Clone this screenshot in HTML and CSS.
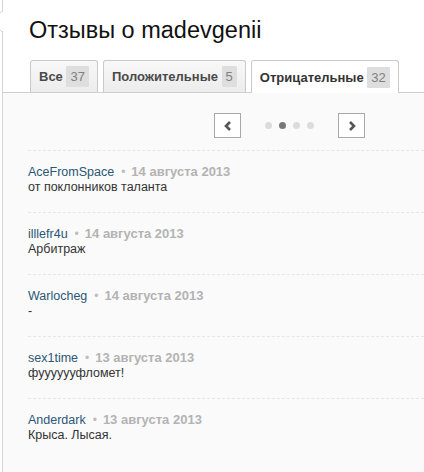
FILE: index.html
```html
<!DOCTYPE html>
<html lang="ru">
<head>
<meta charset="utf-8">
<title>Отзывы о madevgenii</title>
<link rel="stylesheet" href="styles.css">
</head>
<body>
<div class="popover">
  <span class="arrow"></span>
  <h1 class="title">Отзывы о madevgenii</h1>
  <div class="tabs">
    <div class="tab">Все <span class="count">37</span></div>
    <div class="tab">Положительные <span class="count">5</span></div>
    <div class="tab active">Отрицательные <span class="count">32</span></div>
  </div>
  <div class="panel">
    <div class="pager">
      <button class="pg-btn" aria-label="Назад"><svg width="8" height="10" viewBox="0 0 8 10"><polyline points="6,1 2,5 6,9" fill="none" stroke="#555" stroke-width="2.6"/></svg></button>
      <div class="dots"><span class="dot"></span><span class="dot on"></span><span class="dot"></span><span class="dot"></span></div>
      <button class="pg-btn" aria-label="Вперёд"><svg width="8" height="10" viewBox="0 0 8 10"><polyline points="2,1 6,5 2,9" fill="none" stroke="#555" stroke-width="2.6"/></svg></button>
    </div>
    <ul class="reviews">
      <li class="review"><div class="meta"><span class="author">AceFromSpace</span><span class="sep">•</span><span class="date">14 августа 2013</span></div><div class="text">от поклонников таланта</div></li>
      <li class="review"><div class="meta"><span class="author">illlefr4u</span><span class="sep">•</span><span class="date">14 августа 2013</span></div><div class="text">Арбитраж</div></li>
      <li class="review"><div class="meta"><span class="author">Warlocheg</span><span class="sep">•</span><span class="date">14 августа 2013</span></div><div class="text">-</div></li>
      <li class="review"><div class="meta"><span class="author">sex1time</span><span class="sep">•</span><span class="date">13 августа 2013</span></div><div class="text">фууууууфломет!</div></li>
      <li class="review"><div class="meta"><span class="author">Anderdark</span><span class="sep">•</span><span class="date">13 августа 2013</span></div><div class="text">Крыса. Лысая.</div></li>
    </ul>
  </div>
</div>
</body>
</html>
```
FILE: styles.css
```css
html, body {
  margin: 0;
  padding: 0;
  background: #fff;
  font-family: "Liberation Sans", Arial, sans-serif;
  overflow: hidden;
}
.popover {
  position: relative;
  margin-left: 2px;
  border-left: 1px solid #d4d4d4;
  background: #fff;
  min-height: 472px;
  display: flex;
  flex-direction: column;
}
.arrow {
  position: absolute;
  left: -9px;
  top: 14px;
  width: 14px;
  height: 14px;
  background: #fff;
  border-left: 1px solid #d4d4d4;
  border-bottom: 1px solid #d4d4d4;
  transform: rotate(45deg);
}
.title {
  margin: 16px 0 16px 26px;
  font-size: 23.5px;
  line-height: 28px;
  font-weight: normal;
  color: #111;
}
.tabs {
  display: flex;
  align-items: flex-start;
  gap: 5px;
  padding-left: 27px;
  height: 32px;
  border-bottom: 1px solid #cfcfcf;
}
.tab {
  box-sizing: border-box;
  height: 32px;
  display: flex;
  align-items: center;
  padding: 0 8px;
  border: 1px solid #c9c9c9;
  border-bottom: none;
  border-radius: 3px 3px 0 0;
  background: linear-gradient(#f8f8f8, #ececec);
  font-size: 13px;
  font-weight: bold;
  color: #4a4a4a;
  white-space: pre;
}
.tab.active {
  height: 33px;
  margin-bottom: -1px;
  background: #fff;
  color: #333;
}
.count {
  padding: 0 4px;
  height: 21px;
  line-height: 21px;
  background: #dedede;
  color: #808080;
  font-weight: normal;
  border-radius: 1px;
}
.panel {
  flex: 1;
  background: #fafafa;
}
.pager {
  display: flex;
  align-items: center;
  padding: 20px 0 0 211px;
  height: 25px;
}
.pg-btn {
  box-sizing: border-box;
  width: 27px;
  height: 25px;
  padding: 0;
  border: 1px solid #a8a8a8;
  background: #fff;
  display: flex;
  align-items: center;
  justify-content: center;
}
.dots {
  display: flex;
  gap: 7px;
  margin: 0 24px;
}
.dot {
  width: 7px;
  height: 7px;
  border-radius: 50%;
  background: #dcdcdc;
}
.dot.on {
  background: #777;
}
.reviews {
  list-style: none;
  margin: 12px 0 0 25px;
  padding: 0;
}
.review {
  border-top: 1px dashed #e6e6e6;
  padding: 13px 0 17px;
  line-height: 15px;
  font-size: 12.5px;
}
.meta {
  display: flex;
  align-items: baseline;
}
.author {
  color: #2b5775;
}
.sep {
  color: #bdbdbd;
  margin: 0 6px 0 7px;
  font-size: 12px;
}
.date {
  color: #b3b3b3;
  font-weight: bold;
  font-size: 13px;
}
.text {
  color: #333;
}
```
